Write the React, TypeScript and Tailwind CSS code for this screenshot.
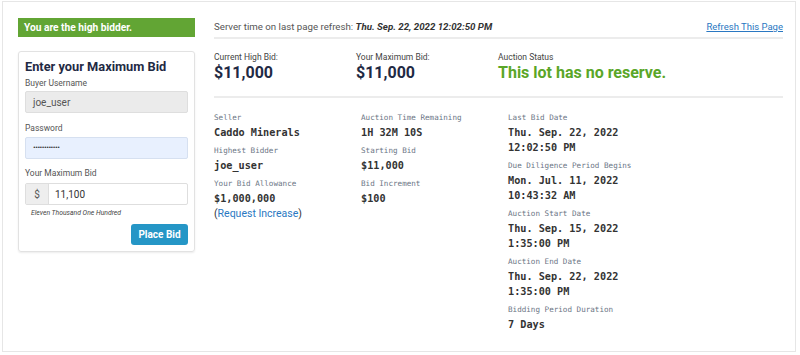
import React from "react";

const sans = { fontFamily: "Roboto, 'Noto Sans', sans-serif" };

function Label({ children }: { children: React.ReactNode }) {
  return <div className="text-[7.6px] leading-[14px] text-[#6b7585]">{children}</div>;
}
function Value({ children }: { children: React.ReactNode }) {
  return <div className="text-[10.2px] leading-[15px] font-bold text-[#333]">{children}</div>;
}
function Item({ label, lines, extra }: { label: string; lines: string[]; extra?: React.ReactNode }) {
  return (
    <div className="mb-[4px]">
      <Label>{label}</Label>
      {lines.map((l) => (
        <Value key={l}>{l}</Value>
      ))}
      {extra}
    </div>
  );
}

export default function App() {
  return (
    <div className="w-[800px] h-[355px] bg-white pt-px pl-[2px] pr-[4px] pb-[3px]" style={sans}>
      <div className="h-full border border-[#e6e6e6] flex pl-[15px] pt-[16px] pr-[12px]">
        {/* Left column */}
        <div className="w-[177px] shrink-0">
          <div className="h-[19px] bg-[#62a534] text-white font-bold text-[10.2px] px-[6px] flex items-center">
            You are the high bidder.
          </div>
          <div className="mt-[14px] border border-[#e2e2e2] rounded-[3px] shadow-[0_1px_2px_rgba(0,0,0,0.08)] px-[6px] pt-[6px] pb-[6px]">
            <div className="text-[12.8px] leading-[18px] font-bold text-[#1f2a44] whitespace-nowrap">Enter your Maximum Bid</div>
            <div className="text-[8.5px] leading-[12px] text-[#555] mt-[1px]">Buyer Username</div>
            <div className="mt-[2px] h-[22px] bg-[#ebebeb] border border-[#dedede] rounded-[2px] flex items-center px-[7px] text-[10px] text-[#555]">
              joe_user
            </div>
            <div className="text-[8.5px] leading-[12px] text-[#555] mt-[9px]">Password</div>
            <div className="mt-[3px] h-[22px] bg-[#e8f0fe] border border-[#d6e0f0] rounded-[2px] flex items-center px-[7px] text-[8px] text-[#333] tracking-[-0.5px]">
              ••••••••••••
            </div>
            <div className="text-[8.5px] leading-[12px] text-[#555] mt-[8px]">Your Maximum Bid</div>
            <div className="mt-[4px] h-[22px] border border-[#dedede] rounded-[2px] flex text-[10px] text-[#333]">
              <div className="w-[23px] bg-[#eeeeee] border-r border-[#dedede] flex items-center justify-center text-[#555]">$</div>
              <div className="flex items-center pl-[6px]">11,100</div>
            </div>
            <div className="mt-[3px] pl-[6px] text-[6.8px] leading-[10px] italic text-[#444]">Eleven Thousand One Hundred</div>
            <div className="flex justify-end mt-[6px]">
              <div className="w-[57px] h-[21px] bg-[#2596c6] rounded-[3px] text-white font-bold text-[10px] flex items-center justify-center">
                Place Bid
              </div>
            </div>
          </div>
        </div>

        {/* Right column */}
        <div className="flex-1 ml-[19px]">
          <div className="h-[21px] flex justify-between items-center border-b-2 border-[#ececec] pb-[1px]">
            <div className="text-[9.7px] text-[#555]">
              Server time on last page refresh:{" "}
              <span className="font-bold italic text-[#333]">Thu. Sep. 22, 2022 12:02:50 PM</span>
            </div>
            <div className="text-[9.5px] text-[#2a78c2] underline">Refresh This Page</div>
          </div>
          <div className="flex pt-[13px] pb-[13px] border-b-2 border-[#ececec]">
            <div className="w-[142px]">
              <div className="text-[8.5px] leading-[10px] text-[#444]">Current High Bid:</div>
              <div className="text-[16px] leading-[21px] font-bold text-[#1f2a44]">$11,000</div>
            </div>
            <div className="w-[142px]">
              <div className="text-[8.5px] leading-[10px] text-[#444]">Your Maximum Bid:</div>
              <div className="text-[16px] leading-[21px] font-bold text-[#1f2a44]">$11,000</div>
            </div>
            <div>
              <div className="text-[8.5px] leading-[10px] text-[#444]">Auction Status</div>
              <div className="text-[16px] leading-[21px] font-bold text-[#5aa628]">This lot has no reserve.</div>
            </div>
          </div>
          <div
            className="flex pt-[13px]"
            style={{ fontFamily: "'DejaVu Sans Mono', 'Liberation Mono', monospace" }}
          >
            <div className="w-[147px]">
              <Item label="Seller" lines={["Caddo Minerals"]} />
              <Item label="Highest Bidder" lines={["joe_user"]} />
              <Item
                label="Your Bid Allowance"
                lines={["$1,000,000"]}
                extra={
                  <div className="text-[10.5px] leading-[15px] text-[#333]" style={sans}>
                    (<span className="text-[#2a78c2]">Request Increase</span>)
                  </div>
                }
              />
            </div>
            <div className="w-[147px]">
              <Item label="Auction Time Remaining" lines={["1H 32M 10S"]} />
              <Item label="Starting Bid" lines={["$11,000"]} />
              <Item label="Bid Increment" lines={["$100"]} />
            </div>
            <div>
              <Item label="Last Bid Date" lines={["Thu. Sep. 22, 2022", "12:02:50 PM"]} />
              <Item label="Due Diligence Period Begins" lines={["Mon. Jul. 11, 2022", "10:43:32 AM"]} />
              <Item label="Auction Start Date" lines={["Thu. Sep. 15, 2022", "1:35:00 PM"]} />
              <Item label="Auction End Date" lines={["Thu. Sep. 22, 2022", "1:35:00 PM"]} />
              <div className="mt-[2px]">
                <Item label="Bidding Period Duration" lines={["7 Days"]} />
              </div>
            </div>
          </div>
        </div>
      </div>
    </div>
  );
}
